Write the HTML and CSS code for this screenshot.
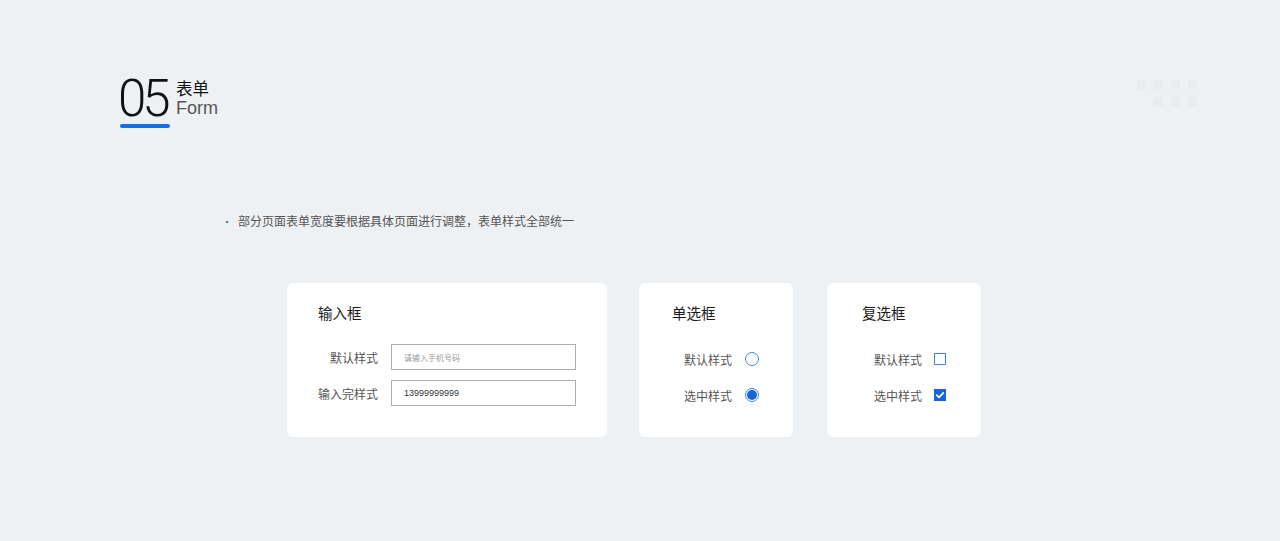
FILE: index.html
```html
<!DOCTYPE html>
<html lang="zh">
<head>
<meta charset="utf-8">
<title>05 表单 Form</title>
<link rel="stylesheet" href="styles.css">
</head>
<body>
<div class="page">
  <div class="decor">
    <span></span><span></span><span></span><span></span>
    <span class="blank"></span><span></span><span></span><span></span>
  </div>
  <header class="header">
    <div class="num-wrap">
      <div class="num">05</div>
      <div class="bar"></div>
    </div>
    <div class="titles">
      <div class="zh">表单</div>
      <div class="en">Form</div>
    </div>
  </header>

  <p class="note"><span class="dot">•</span>部分页面表单宽度要根据具体页面进行调整，表单样式全部统一</p>

  <div class="cards">
    <section class="card card-input">
      <h3 class="card-title">输入框</h3>
      <div class="rows">
        <div class="row">
          <span class="label">默认样式</span>
          <div class="input placeholder">请输入手机号码</div>
        </div>
        <div class="row">
          <span class="label">输入完样式</span>
          <div class="input filled">13999999999</div>
        </div>
      </div>
    </section>

    <section class="card card-radio">
      <h3 class="card-title">单选框</h3>
      <div class="rows">
        <div class="row">
          <span class="label">默认样式</span>
          <span class="radio"></span>
        </div>
        <div class="row">
          <span class="label">选中样式</span>
          <span class="radio checked"></span>
        </div>
      </div>
    </section>

    <section class="card card-check">
      <h3 class="card-title">复选框</h3>
      <div class="rows">
        <div class="row">
          <span class="label">默认样式</span>
          <span class="check"></span>
        </div>
        <div class="row">
          <span class="label">选中样式</span>
          <span class="check checked">
            <svg viewBox="0 0 12 12" width="12" height="12"><path d="M2.6 6.2 L5 8.4 L9.4 3.8" fill="none" stroke="#fff" stroke-width="1.7" stroke-linecap="round" stroke-linejoin="round"/></svg>
          </span>
        </div>
      </div>
    </section>
  </div>
</div>
</body>
</html>
```

FILE: styles.css
```css
* { box-sizing: border-box; }
html, body { margin: 0; padding: 0; }
body {
  background: #eef1f4;
  font-family: "Noto Sans CJK SC", "Noto Sans", sans-serif;
  color: #333;
  width: 1280px;
  height: 541px;
  overflow: hidden;
}
.page {
  position: relative;
  width: 1280px;
  height: 541px;
  padding-top: 74px;
}
.decor {
  position: absolute;
  left: 1137px;
  top: 80px;
  display: grid;
  grid-template-columns: repeat(4, 9px);
  column-gap: 8px;
  row-gap: 8px;
}
.decor span {
  width: 9px;
  height: 9px;
  background: #eaebed;
}
.decor span.blank { background: transparent; }

.header {
  display: flex;
  margin-left: 120px;
  align-items: flex-start;
}
.num-wrap {
  display: flex;
  flex-direction: column;
  width: 50px;
}
.num {
  font-family: Roboto, "Liberation Sans", sans-serif;
  font-weight: 300;
  font-size: 51px;
  line-height: 50px;
  letter-spacing: -4px;
  color: #111;
  margin-left: -2px;
  white-space: nowrap;
}
.bar {
  width: 50px;
  height: 4px;
  border-radius: 2px;
  background: #1a6fe0;
}
.titles {
  margin-left: 6px;
  margin-top: 5px;
}
.zh {
  font-size: 16.5px;
  line-height: 18px;
  color: #111;
}
.en {
  font-family: "Liberation Sans", Arial, sans-serif;
  font-size: 18px;
  line-height: 20px;
  margin-top: 1px;
  color: #555;
}

.note {
  margin: 85px 0 0 222px;
  font-size: 12px;
  line-height: 16px;
  color: #555;
}
.note .dot {
  display: inline-block;
  width: 16px;
  font-size: 10px;
  color: #555;
}

.cards {
  display: flex;
  margin: 53px 0 0 287px;
}
.card {
  background: #fff;
  border-radius: 6px;
  height: 154px;
  padding-top: 20px;
}
.card-input { width: 320px; padding-left: 31px; }
.card-radio { width: 154px; padding-left: 33px; margin-left: 32px; }
.card-check { width: 154px; padding-left: 35px; margin-left: 34px; }
.card-title {
  margin: 0;
  font-size: 14.5px;
  line-height: 20px;
  font-weight: 400;
  color: #1a1a1a;
}
.rows {
  margin-top: 21px;
  display: flex;
  flex-direction: column;
  gap: 10px;
}
.card-radio .rows, .card-check .rows { margin-top: 23px; }
.row {
  display: flex;
  align-items: center;
  height: 26px;
}
.label {
  font-size: 12px;
  color: #555;
  text-align: right;
}
.card-input .label { width: 60px; margin-right: 13px; }
.card-radio .label { margin-left: 12px; margin-right: 13px; }
.card-check .label { margin-left: 12px; margin-right: 12px; }

.input {
  width: 185px;
  height: 26px;
  border: 1px solid #adadad;
  padding-left: 12px;
  display: flex;
  align-items: center;
  font-size: 8px;
}
.input.placeholder { color: #9a9a9a; font-size: 8px; }
.input.filled {
  font-family: "Liberation Sans", Arial, sans-serif;
  font-size: 9px;
  color: #333;
}

.radio {
  width: 14px;
  height: 14px;
  border-radius: 50%;
  border: 1px solid #3d87ea;
  background: #fff;
  position: relative;
}
.radio.checked::after {
  content: "";
  position: absolute;
  left: 1px;
  top: 1px;
  width: 10px;
  height: 10px;
  border-radius: 50%;
  background: #1666d8;
}
.check {
  width: 12px;
  height: 12px;
  border: 1.5px solid #3d87ea;
  background: #fff;
  display: flex;
  align-items: center;
  justify-content: center;
}
.check.checked {
  background: #1666d8;
  border-color: #1666d8;
}
.check svg { display: block; flex: none; }
```
